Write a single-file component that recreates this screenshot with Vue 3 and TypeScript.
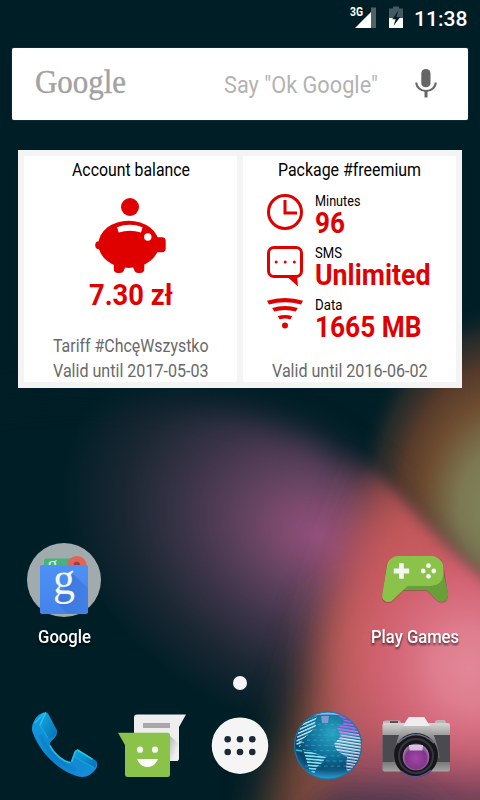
<script setup lang="ts">
import { h, type FunctionalComponent } from 'vue'

interface LabelProps {
  text: string
  width: number
  size: number
}

// Single line of condensed text fitted to a fixed width.
const FitLabel: FunctionalComponent<LabelProps> = (props) =>
  h('svg', { width: props.width, height: props.size + 4 }, [
    h(
      'text',
      {
        x: 0,
        y: props.size,
        'font-size': props.size,
        textLength: props.width,
        lengthAdjust: 'spacingAndGlyphs',
        fill: 'currentColor',
      },
      props.text,
    ),
  ])
FitLabel.props = ['text', 'width', 'size']

interface Stat {
  icon: 'clock' | 'sms' | 'data'
  name: string
  nameWidth: number
  value: string
  valueWidth: number
}

const stats: Stat[] = [
  { icon: 'clock', name: 'Minutes', nameWidth: 45.5, value: '96', valueWidth: 30 },
  { icon: 'sms', name: 'SMS', nameWidth: 27, value: 'Unlimited', valueWidth: 115.5 },
  { icon: 'data', name: 'Data', nameWidth: 27.5, value: '1665 MB', valueWidth: 106.5 },
]

const drawerDots = [
  [227.7, 739.3], [240, 739.3], [252.3, 739.3],
  [227.7, 752], [240, 752], [252.3, 752],
]

const globeDots: number[][] = []
for (let row = 0; row < 9; row++) {
  for (let col = 0; col < 8; col++) {
    globeDots.push([305 + col * 6.4 + (row % 2) * 2, 724 + row * 5.2])
  }
}
</script>

<template>
  <div class="screen">
    <svg class="wallpaper" width="480" height="800" viewBox="0 0 480 800">
      <defs>
        <filter id="b8" x="-30%" y="-30%" width="160%" height="160%"><feGaussianBlur stdDeviation="7" /></filter>
        <filter id="b16" x="-50%" y="-50%" width="200%" height="200%"><feGaussianBlur stdDeviation="16" /></filter>
        <filter id="b22" x="-60%" y="-60%" width="220%" height="220%"><feGaussianBlur stdDeviation="22" /></filter>
        <radialGradient id="violet" gradientUnits="userSpaceOnUse" cx="0" cy="0" r="1" gradientTransform="translate(318 535) rotate(22) scale(265 195)">
          <stop offset="0" stop-color="#92507e" />
          <stop offset=".14" stop-color="#7e4a6e" />
          <stop offset=".3" stop-color="#60425e" />
          <stop offset=".52" stop-color="#3c3448" />
          <stop offset=".75" stop-color="#1b2733" />
          <stop offset="1" stop-color="#001e26" />
        </radialGradient>
        <radialGradient id="olive" gradientUnits="userSpaceOnUse" cx="0" cy="0" r="1" gradientTransform="translate(505 510) scale(155 210)">
          <stop offset="0" stop-color="#84895f" />
          <stop offset=".3" stop-color="#7c7852" />
          <stop offset=".52" stop-color="#6e4d30" />
          <stop offset=".68" stop-color="#5c3c2b" stop-opacity=".95" />
          <stop offset=".85" stop-color="#33302b" stop-opacity=".7" />
          <stop offset="1" stop-color="#001e26" stop-opacity="0" />
        </radialGradient>
        <linearGradient id="lobe" gradientUnits="userSpaceOnUse" x1="370" y1="470" x2="385" y2="810">
          <stop offset="0" stop-color="#96493f" />
          <stop offset=".22" stop-color="#bf5355" />
          <stop offset=".5" stop-color="#cb5f62" />
          <stop offset=".75" stop-color="#b85a66" />
          <stop offset="1" stop-color="#6a4058" />
        </linearGradient>
        <radialGradient id="rose" gradientUnits="userSpaceOnUse" cx="0" cy="0" r="1" gradientTransform="translate(470 668) rotate(-20) scale(115 130)">
          <stop offset="0" stop-color="#e28797" />
          <stop offset=".3" stop-color="#e07f91" stop-opacity=".95" />
          <stop offset=".65" stop-color="#da6c82" stop-opacity=".6" />
          <stop offset="1" stop-color="#d4607a" stop-opacity="0" />
        </radialGradient>
        <mask id="crest" maskUnits="userSpaceOnUse" x="0" y="350" width="480" height="450">
          <path d="M-40 405 C120 385 225 395 305 432 C370 465 420 525 500 605 V850 H-40z" fill="#fff" filter="url(#b16)" />
        </mask>
        <mask id="edge" maskUnits="userSpaceOnUse" x="0" y="350" width="480" height="450">
          <path d="M0 350 H245 C300 410 350 448 395 492 C430 530 465 565 540 622 V850 H0z" fill="#fff" filter="url(#b8)" />
        </mask>
      </defs>
      <rect width="480" height="800" fill="#001e26" />
      <rect x="330" y="290" width="150" height="360" fill="url(#olive)" />
      <g mask="url(#crest)"><rect y="350" width="480" height="450" fill="url(#violet)" /></g>
      <g mask="url(#edge)">
        <path d="M330 600 C318 640 312 660 302 695 C292 730 272 770 262 850 H400 V600z" fill="#7d4c38" filter="url(#b22)" />
        <path d="M385 455 C350 540 332 590 330 640 C324 700 330 760 330 850 H580 V430z" fill="url(#lobe)" filter="url(#b22)" />
        <path d="M400 490 C365 545 348 610 346 680 L350 740 H560 V500z" fill="#cf6068" filter="url(#b22)" opacity=".5" />
        <rect x="330" y="530" width="150" height="270" fill="url(#rose)" />
        <path d="M290 840 L330 792 L420 797 L450 830z" fill="#46364a" filter="url(#b16)" />
      </g>
    </svg>

    <header class="status">
      <svg width="120" height="34" viewBox="348 0 120 34">
        <text class="network" x="350" y="16" textLength="13" lengthAdjust="spacingAndGlyphs">3G</text>
        <path d="M355 28L371 12V28z" fill="#fff" />
        <path d="M371 12V7.5H376V28H371z" fill="#506168" />
        <path d="M389 8.5h4V6.5h6v2h4V18h-14z" fill="#455960" />
        <path d="M389 18h14v10h-14z" fill="#fff" />
        <path d="M398.4 10.5L392.2 19.2h3.4l-2 6.5L400.3 17H396.5z" fill="#001e26" />
        <text class="clock" x="414" y="26" textLength="53.5" lengthAdjust="spacingAndGlyphs">11:38</text>
      </svg>
    </header>

    <main class="home">
      <section class="search">
        <FitLabel class="brand" text="Google" :width="91" :size="33" />
        <FitLabel class="hint" text="Say &quot;Ok Google&quot;" :width="154" :size="24" />
        <svg class="mic" width="22" height="30" viewBox="415 68 22 30">
          <rect x="421.3" y="69" width="9.2" height="18.3" rx="4.4" fill="#666" />
          <path d="M416.3 82.5a9.7 8.6 0 0 0 19.4 0" fill="none" stroke="#666" stroke-width="2" />
          <path d="M426 91v6.5" stroke="#666" stroke-width="3" />
        </svg>
      </section>

      <section class="widget">
        <article class="card">
          <FitLabel class="title" text="Account balance" :width="118" :size="18" />
          <svg class="piggy" width="72" height="75" viewBox="95 198 72 75">
            <g fill="#df0000">
              <circle cx="130" cy="207" r="9" />
              <ellipse cx="128.7" cy="244.3" rx="30.3" ry="23.6" />
              <circle cx="99.2" cy="245.3" r="4" />
              <rect x="150" y="237.3" width="15.7" height="14.9" rx="3.6" />
              <path d="M113.8 260H144.3V269Q144.3 273 140 273H138.500Q135 273 134 269.500C133 266 131 265 129 265C127 265 125.200 266 124.300 269.500Q123.300 273 119.500 273H118Q113.800 273 113.800 269z" />
            </g>
            <path d="M117 227.2 Q129.7 222.5 142.6 227.2 L141 232.6 Q129.8 228.8 118.7 232.6z" fill="#fff" />
            <circle cx="147.8" cy="237" r="3.7" fill="#fff" />
          </svg>
          <FitLabel class="amount" text="7.30 zł" :width="84" :size="30" />
          <div class="footer">
            <FitLabel text="Tariff #ChcęWszystko" :width="155.5" :size="18" />
            <FitLabel text="Valid until 2017-05-03" :width="155.5" :size="18" />
          </div>
        </article>

        <article class="card">
          <FitLabel class="title" text="Package #freemium" :width="143" :size="18" />
          <ul class="stats">
            <li v-for="stat in stats" :key="stat.name" class="stat">
              <svg v-if="stat.icon === 'clock'" class="stat-icon" width="36" height="42" viewBox="0 0 36 42" fill="none" stroke="#df0000">
                <circle cx="18" cy="18" r="16.5" stroke-width="3" />
                <path d="M18 6V19H30" stroke-width="3" />
              </svg>
              <svg v-else-if="stat.icon === 'sms'" class="stat-icon" width="36" height="42" viewBox="0 0 36 42">
                <rect x="1.5" y="1.5" width="33" height="29" rx="5.5" fill="none" stroke="#df0000" stroke-width="3" />
                <path d="M20.5 31L31 40.5L30 29z" fill="#df0000" />
                <g fill="#df0000"><circle cx="9.2" cy="16" r="1.5" /><circle cx="18.2" cy="16" r="1.5" /><circle cx="27.3" cy="16" r="1.5" /></g>
              </svg>
              <svg v-else class="stat-icon" width="36" height="42" viewBox="0 0 36 42" fill="#df0000">
                <path d="M0 2.8Q18-2.8 36 2.8L34 6.6Q18 1.8 2 6.6z" />
                <path d="M5.2 10Q18 6 30.8 10L28.7 13.6Q18 10.2 7.3 13.6z" />
                <path d="M10.8 18.2Q18 15.8 25.2 18.2L23.3 21.4Q18 19.8 12.7 21.4z" />
                <circle cx="18" cy="27.5" r="3" />
              </svg>
              <div class="stat-text">
                <FitLabel class="stat-name" :text="stat.name" :width="stat.nameWidth" :size="15" />
                <FitLabel class="stat-value" :text="stat.value" :width="stat.valueWidth" :size="30" />
              </div>
            </li>
          </ul>
          <div class="footer">
            <FitLabel text="Valid until 2016-06-02" :width="155.5" :size="18" />
          </div>
        </article>
      </section>

      <section class="shortcuts">
        <div class="shortcut">
          <svg width="88" height="80" viewBox="20 540 88 80">
            <defs>
              <linearGradient id="folderBlue" x1="0" y1="0" x2="0" y2="1"><stop offset="0" stop-color="#4e91f6" /><stop offset="1" stop-color="#4483ea" /></linearGradient>
              <linearGradient id="folderShade" x1="0" y1="0" x2="1" y2="1"><stop offset="0" stop-color="#275abc" stop-opacity=".5" /><stop offset="1" stop-color="#275abc" stop-opacity=".08" /></linearGradient>
            </defs>
            <circle cx="64" cy="580" r="37" fill="#a1abae" />
            <rect x="44" y="558.5" width="40" height="30" rx="2.5" fill="#46b47c" />
            <text class="g-small" x="47.5" y="571">g</text>
            <circle cx="76.8" cy="566.2" r="10.2" fill="#e26359" />
            <circle cx="76.8" cy="565" r="3.2" fill="#a43b37" />
            <rect x="40" y="565.6" width="48" height="48.3" rx="2" fill="#6f8088" />
            <rect x="40" y="565" width="48" height="48" rx="2" fill="url(#folderBlue)" />
            <path d="M73 574L88 588V611Q88 613 86 613H67L56 602z" fill="url(#folderShade)" />
            <text class="g-large" x="53" y="594" textLength="22" lengthAdjust="spacingAndGlyphs">g</text>
          </svg>
          <FitLabel class="shortcut-name" text="Google" :width="53" :size="18" />
        </div>
        <div class="shortcut">
          <svg width="88" height="80" viewBox="371 540 88 80">
            <path d="M394 557H434Q442 557 443.5 566L448 595Q448 602.8 441.5 602.8Q438 602.8 436 600L427 591H403L393.5 600.5Q391 603 388 603Q382 602.5 382 597L386.5 566Q389 557 394 557z" fill="#00000040" />
            <path d="M403 583L434 586L443 571L448 593C448.6 598 446 602 441.5 602Q438.5 602 436 599.5L427 590.3H402z" fill="#689f38" />
            <path d="M398 556H431C438 556 443.5 561 443.5 568V573C443.5 581 438 586 430 586H407.5L394 599C391 602.5 388 602.5 385.5 601.5Q381.8 599.5 382.2 595L387 565C388.3 559.5 392.5 556 398 556z" fill="#8bc34a" />
            <path d="M399 563.2h4.8v5.4h5.4v4.8h-5.4v5.4H399v-5.4h-5.2v-4.8h5.2z" fill="#f5f5f5" />
            <g fill="#f5f5f5"><circle cx="428.5" cy="565.7" r="2.4" /><circle cx="428.5" cy="576.3" r="2.4" /><circle cx="423.2" cy="571" r="2.4" /><circle cx="433.8" cy="571" r="2.4" /></g>
          </svg>
          <FitLabel class="shortcut-name" text="Play Games" :width="88" :size="18" />
        </div>
      </section>

      <div class="page-dot"></div>

      <nav class="dock">
        <svg width="88" height="80" viewBox="20 706 88 80">
          <defs>
            <linearGradient id="phoneBody" x1="0" y1="0" x2="1" y2="1"><stop offset="0" stop-color="#149de2" /><stop offset=".5" stop-color="#0d84cf" /><stop offset="1" stop-color="#1690da" /></linearGradient>
            <linearGradient id="phoneFace" x1="0" y1="0" x2="1" y2="1"><stop offset="0" stop-color="#14a9df" /><stop offset="1" stop-color="#0570b4" /></linearGradient>
          </defs>
          <path d="M45.500 712Q37 713.500 33.500 722Q31 727 32.500 732C37 744 44 754 54 763C63 770.500 73 776 82 777C89 777 94 772 96.500 768Q98 763 96 761L79 750Q76 748.500 74 753L70.500 762C64 762 53 751 50 744C50 740.500 57 738 57 732Q57 730 48 713.500z" fill="url(#phoneBody)" />
          <path d="M46 713L57 730.500Q57.500 733 55 736L49 739L40 725.500Z" fill="url(#phoneFace)" />
          <path d="M77.500 749.500L96 761Q97.500 764 95 767.500L74 757Q75 751 77.500 749.500z" fill="url(#phoneFace)" />
          <path d="M45.500 713L40 725M72 761L75 752L77.500 750L92 759M50 746C54 754 62 761 70 762.500" fill="none" stroke="#30d3f6" stroke-width="1.500" stroke-linecap="round" opacity=".75" />
          <path d="M40 725L48 738M74 757L94 767.500" fill="none" stroke="#1fb1ea" stroke-width="1.200" opacity=".6" />
          <path d="M35 723L44 713.500" stroke="#2bc2f2" stroke-width="1.600" opacity=".8" />
          <path d="M40 735C47 751 59 764 76 770" fill="none" stroke="#0875bb" stroke-width="4" opacity=".35" />
        </svg>
        <svg width="88" height="80" viewBox="108 706 88 80">
          <defs>
            <linearGradient id="bubbleShade" x1="0" y1="0" x2="1" y2="1"><stop offset="0" stop-color="#aaa" /><stop offset=".7" stop-color="#efefef" /></linearGradient>
          </defs>
          <path d="M137 714.5H186L179 727V758Q179 761 176 761H134V717.5Q134 714.5 137 714.5z" fill="#eee" />
          <path d="M168 734L179 744V758Q179 761 176 761H169z" fill="url(#bubbleShade)" />
          <rect x="143" y="723" width="27" height="5" fill="#a8a8a8" />
          <path d="M118 732.8H167.5Q170 732.8 170 735.5V774.5Q170 777 167.5 777H128Q125 777 125 774.5V745z" fill="#8bc34a" />
          <circle cx="140" cy="749.7" r="3.1" fill="#f5f5f5" /><circle cx="155" cy="749.7" r="3.1" fill="#f5f5f5" />
          <path d="M137 759h21c-2 5.2-6 8-10.5 8s-8.5-2.8-10.5-8z" fill="#fff" />
        </svg>
        <svg width="88" height="80" viewBox="196 706 88 80">
          <circle cx="240" cy="746.3" r="28.5" fill="#0004" />
          <circle cx="240" cy="745.7" r="28.3" fill="#f5f5f5" />
          <circle v-for="(dot, i) in drawerDots" :key="i" :cx="dot[0]" :cy="dot[1]" r="3.3" fill="#1c2a36" />
        </svg>
        <svg width="88" height="80" viewBox="284 706 88 80">
          <defs>
            <radialGradient id="ocean" cx=".56" cy=".32" r=".68"><stop offset="0" stop-color="#2aa3c0" /><stop offset=".5" stop-color="#10719a" /><stop offset=".82" stop-color="#094468" /><stop offset="1" stop-color="#1470a0" /></radialGradient>
            <linearGradient id="eastLand" x1="0" y1="0" x2="0" y2="1"><stop offset="0" stop-color="#b845e8" /><stop offset=".3" stop-color="#c96af0" /><stop offset=".45" stop-color="#e6eefa" /><stop offset="1" stop-color="#c5c4f2" /></linearGradient>
            <linearGradient id="floorGlow" x1="0" y1="0" x2="0" y2="1"><stop offset="0" stop-color="#2293d0" stop-opacity="0" /><stop offset="1" stop-color="#35b4ee" /></linearGradient>
            <pattern id="stripes" width="40" height="3" patternUnits="userSpaceOnUse" patternTransform="rotate(9)"><rect width="40" height="1.6" fill="#fff" /></pattern>
            <pattern id="stripesLeft" width="40" height="3.1" patternUnits="userSpaceOnUse" patternTransform="rotate(-24)"><rect width="40" height="1.4" fill="#c3e6f5" /></pattern>
            <pattern id="stripesSouth" width="40" height="3.1" patternUnits="userSpaceOnUse" patternTransform="rotate(5)"><rect width="40" height="1.6" fill="#86e2f2" /></pattern>
            <mask id="eastMask"><path d="M336 713C348 715 358 725 361.5 741C362 755 357 765 348 773L346 768L347 757L337 751L334 744L341 736L337 728L345 722z" fill="url(#stripes)" /></mask>
            <clipPath id="globeClip"><circle cx="328" cy="745.5" r="33.5" /></clipPath>
          </defs>
          <circle cx="328" cy="745.5" r="34" fill="url(#ocean)" />
          <g clip-path="url(#globeClip)">
            <rect v-for="(dot, i) in globeDots" :key="i" :x="dot[0]" :y="dot[1]" width="3.4" height="1.2" fill="#39b4d6" opacity=".5" />
            <path d="M310 716Q328 708 346 716L342 715.500Q327 713.500 310 716z" fill="#9bb4ee" />
            <path d="M321 716h8l-1 7h-6z" fill="#b6a8e8" opacity=".65" />
            <path d="M318 715L305 721L298 732L296 744L300 747L303 739L309 734L316 726L315 721z" fill="url(#stripesLeft)" />
            <path d="M296 750L302 751M299 741L304 743" stroke="#36bfe2" stroke-width="1.3" />
            <path d="M303 749L312 752L326 757L322 763L317 767L314 774L309 769L306 759z" fill="url(#stripesSouth)" />
            <rect x="330" y="710" width="34" height="66" fill="url(#eastLand)" mask="url(#eastMask)" />
            <ellipse cx="328" cy="773" rx="24" ry="7" fill="url(#floorGlow)" opacity=".75" />
          </g>
          <circle cx="328" cy="745.5" r="33.5" fill="none" stroke="#1f7ba8" stroke-width="1" />
        </svg>
        <svg width="88" height="80" viewBox="372 706 88 80">
          <defs>
            <linearGradient id="metal" x1="0" y1="0" x2="0" y2="1"><stop offset="0" stop-color="#d5d5d5" /><stop offset=".25" stop-color="#9e9e9e" /><stop offset=".8" stop-color="#777" /><stop offset="1" stop-color="#a5a5a5" /></linearGradient>
            <linearGradient id="prism" x1="0" y1="0" x2="0" y2="1"><stop offset="0" stop-color="#e8e8e8" /><stop offset=".25" stop-color="#b9b9b9" /><stop offset=".5" stop-color="#858585" /><stop offset="1" stop-color="#555" /></linearGradient>
            <radialGradient id="glass" cx=".5" cy=".55" r=".55"><stop offset="0" stop-color="#a545a8" /><stop offset=".7" stop-color="#80368a" /><stop offset="1" stop-color="#a78fb2" /></radialGradient>
          </defs>
          <path d="M383 724.5V722Q383 720.5 386 720.5H399Q401 720.5 401 724zM435 724V722Q435 720 438 720H444Q446 720 446 724z" fill="#b8b8b8" />
          <path d="M390 721h8v3h-8z" fill="#555" />
          <rect x="382.5" y="723" width="67.5" height="48.5" rx="2" fill="url(#metal)" />
          <rect x="382.5" y="735" width="67.5" height="27" fill="#4b4a50" />
          <path d="M393 762C396 739 401 727 409 717H424C431 727 436 737 440 758z" fill="url(#prism)" />
          <path d="M409 717H424L430 726H403z" fill="#ededed" />
          <circle cx="416" cy="755" r="22" fill="#17171b" />
          <path d="M398 743Q416 726 434 743" fill="none" stroke="#667080" stroke-width="1.5" />
          <circle cx="416" cy="756" r="17" fill="none" stroke="#38343b" stroke-width="2" />
          <circle cx="416" cy="757" r="13.300" fill="url(#glass)" />
          <path d="M409 745H423L422.5 750.500H409.5z" fill="#e4d4e8" opacity=".85" />
          <path d="M401 771Q416 783 431 770" fill="none" stroke="#54579c" stroke-width="1.3" />
        </svg>
      </nav>
    </main>
  </div>
</template>

<style>
body {
  margin: 0;
  background: #001e26;
}
</style>

<style scoped>
.screen {
  position: relative;
  width: 480px;
  height: 800px;
  overflow: hidden;
  font-family: Roboto, 'Liberation Sans', sans-serif;
}
.screen svg {
  display: block;
  flex: none;
  overflow: visible;
}
.wallpaper {
  position: absolute;
  inset: 0;
}
.status {
  position: relative;
  display: flex;
  justify-content: flex-end;
  height: 48px;
  padding-right: 12px;
  box-sizing: border-box;
}
.network {
  font-size: 12px;
  font-weight: 700;
  fill: #fff;
}
.clock {
  font-size: 21px;
  font-weight: 500;
  fill: #fff;
}
.home {
  position: relative;
  display: flex;
  flex-direction: column;
}
.search {
  display: flex;
  margin: 0 12px;
  height: 72px;
  padding: 0 31px 0 23px;
  box-sizing: border-box;
  background: #fff;
  border-radius: 2px;
  box-shadow: 0 0 1px #fff8;
}
.brand {
  margin-top: 12px;
  font-family: 'Liberation Serif', serif;
  color: #a2a2a2;
  stroke: #a2a2a2;
  stroke-width: 0.4px;
}
.hint {
  margin: 21px 37px 0 auto;
  color: #b3b3b3;
}
.mic {
  margin-top: 20px;
}
.widget {
  display: flex;
  gap: 6px;
  margin: 30px 18px 0;
  padding: 6px;
  height: 238px;
  box-sizing: border-box;
  background: #f4f4f4;
}
.card {
  flex: 1;
  display: flex;
  flex-direction: column;
  align-items: center;
  padding: 2px 0 1px;
  background: #fff;
}
.title {
  color: #000;
}
.piggy {
  margin-top: 18px;
}
.amount {
  margin-top: 2px;
  font-weight: 700;
  color: #df0000;
}
.footer {
  display: flex;
  flex-direction: column;
  gap: 3px;
  margin-top: auto;
  color: #696969;
}
.stats {
  align-self: stretch;
  margin: 11px 0 0;
  padding: 0 0 0 24px;
  list-style: none;
}
.stat {
  display: flex;
  gap: 12px;
  height: 52px;
}
.stat-icon {
  margin-top: 3px;
}
.stat-name {
  color: #000;
}
.stat-value {
  margin-top: -7px;
  font-weight: 700;
  color: #df0000;
}
.shortcuts {
  display: flex;
  justify-content: space-between;
  margin: 152px 21px 0 20px;
}
.shortcut {
  display: flex;
  flex-direction: column;
  align-items: center;
  gap: 5px;
  width: 88px;
}
.shortcut-name {
  color: #fff;
  font-weight: 500;
  filter: drop-shadow(0 2px 1px #000a);
}
.g-small {
  font-family: 'Liberation Serif', serif;
  font-size: 20px;
  fill: #d5eee0;
}
.g-large {
  font-family: 'Liberation Serif', serif;
  font-size: 47px;
  fill: #f5f5f5;
}
.page-dot {
  align-self: center;
  width: 14px;
  height: 14px;
  margin-top: 29px;
  border-radius: 50%;
  background: #f5f5f5;
}
.dock {
  display: flex;
  justify-content: center;
  margin-top: 16px;
}
</style>
